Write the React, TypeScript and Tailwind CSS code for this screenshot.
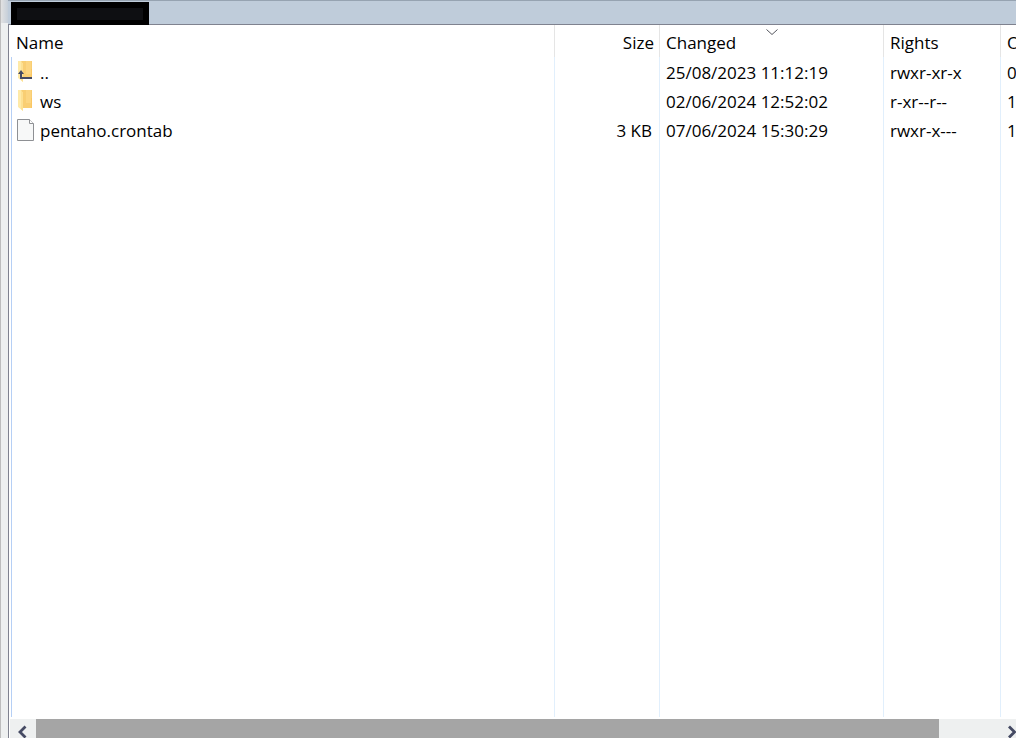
import { ReactNode } from 'react';

type FileRow = {
    name: string;
    icon: ReactNode;
    size: string;
    changed: string;
    rights: string;
    owner: string;
};

function FolderShape() {
    return (
        <>
            <path d="M2 0H15V18H2Z" fill="#f9ce73" />
            <path d="M9 0H14V13H9Z" fill="#fcd581" />
            <path d="M1 0H4L6 3V21L1 17Z" fill="#ffeaa8" />
            <path d="M4 0L6 3V21L4 19Z" fill="#fde092" />
            <path d="M14 8H15V18H14Z" fill="#fbc763" />
        </>
    );
}

function FolderIcon() {
    return (
        <svg width="18" height="22" viewBox="0 0 18 22" aria-hidden="true">
            <FolderShape />
        </svg>
    );
}

function ParentFolderIcon() {
    return (
        <svg width="18" height="22" viewBox="0 0 18 22" aria-hidden="true">
            <FolderShape />
            <path d="M4 11V17H15" fill="none" stroke="#454a63" strokeWidth="2" />
            <path d="M1 13L4 9L7 13Z" fill="#454a63" />
        </svg>
    );
}

function FileIcon() {
    return (
        <svg width="18" height="22" viewBox="0 0 18 22" aria-hidden="true">
            <path d="M0.5 0.5H12.5L16.5 4.5V21.5H0.5Z" fill="#f7f8f8" stroke="#8e9094" />
            <path d="M12.5 0.5V4.5H16.5" fill="#ffffff" stroke="#8e9094" />
        </svg>
    );
}

const rows: FileRow[] = [
    { name: '..', icon: <ParentFolderIcon />, size: '', changed: '25/08/2023 11:12:19', rights: 'rwxr-xr-x', owner: '0' },
    { name: 'ws', icon: <FolderIcon />, size: '', changed: '02/06/2024 12:52:02', rights: 'r-xr--r--', owner: '1' },
    { name: 'pentaho.crontab', icon: <FileIcon />, size: '3 KB', changed: '07/06/2024 15:30:29', rights: 'rwxr-x---', owner: '1' },
];

function FileTable() {
    return (
        <table className="w-full h-full table-fixed border-separate border-spacing-0 whitespace-nowrap text-left">
            <colgroup>
                <col />
                <col className="w-[105px]" />
                <col className="w-[224px]" />
                <col className="w-[117px]" />
                <col className="w-[15px]" />
            </colgroup>
            <thead>
                <tr className="h-8 [&>th]:p-0 [&>th]:font-normal [&>th]:border-r [&>th]:border-[#e5e5e5] [&>th:last-child]:border-r-0">
                    <th><span className="block pl-[5px] pt-1">Name</span></th>
                    <th><span className="block pr-[5px] pt-1 text-right">Size</span></th>
                    <th className="relative">
                        <span className="block pl-1.5 pt-1">Changed</span>
                        <svg className="absolute top-1 left-1/2 -translate-x-1/2" width="12" height="7" viewBox="0 0 12 7" aria-hidden="true">
                            <path d="M0.5 0.5L6 5.5L11.5 0.5" fill="none" stroke="#55575f" />
                        </svg>
                    </th>
                    <th><span className="block pl-1.5 pt-1">Rights</span></th>
                    <th className="overflow-hidden"><span className="block pl-1.5 pt-1">Owner</span></th>
                </tr>
            </thead>
            <tbody className="[&_td]:p-0 [&_td]:border-r [&_td]:border-[#e1effc] [&_td:first-child]:border-l [&_td:first-child]:border-l-[#b5cff5] [&_td:last-child]:border-r-0">
                {rows.map((row) => (
                    <tr key={row.name} className="h-[29px]">
                        <td>
                            <div className="flex items-center gap-[5px] pl-[5px]">
                                {row.icon}
                                <span className="pt-0.5">{row.name}</span>
                            </div>
                        </td>
                        <td><span className="block pt-0.5 pr-[7px] text-right">{row.size}</span></td>
                        <td><span className="block pt-0.5 pl-1.5">{row.changed}</span></td>
                        <td><span className="block pt-0.5 pl-1.5">{row.rights}</span></td>
                        <td className="overflow-hidden"><span className="block pt-0.5 pl-1.5">{row.owner}</span></td>
                    </tr>
                ))}
                {/* Empty row takes the rest of the height so the column lines reach the bottom */}
                <tr>
                    <td /><td /><td /><td /><td />
                </tr>
            </tbody>
        </table>
    );
}

function HorizontalScrollbar() {
    return (
        <div className="flex h-[19px] shrink-0 overflow-hidden bg-[#eef0f0]">
            <button type="button" aria-label="Scroll left" className="flex w-[26px] shrink-0 pl-[7px] pt-1.5">
                <svg width="10" height="14" viewBox="0 0 10 14" aria-hidden="true">
                    <path d="M8.5 1.5L3 7L8.5 12.5" fill="none" stroke="#454a63" strokeWidth="2.8" />
                </svg>
            </button>
            <div className="flex-1 bg-[#a5a5a5]" />
            <div className="w-[67px]" />
            <button type="button" aria-label="Scroll right" className="flex w-2.5 shrink-0 overflow-hidden pt-1.5">
                <svg className="shrink-0" width="12" height="14" viewBox="0 0 12 14" aria-hidden="true">
                    <path d="M3 1.5L8.5 7L3 12.5" fill="none" stroke="#454a63" strokeWidth="2.8" />
                </svg>
            </button>
        </div>
    );
}

export default function App() {
    return (
        <div className="flex h-screen overflow-hidden bg-[#eef0f0] font-['Open_Sans','Noto_Sans',sans-serif] text-[17px] leading-6 text-black">
            <div className="w-2 shrink-0 border-l border-[#bdbdbd]">
                <div className="h-[23px] bg-linear-to-r from-[#e2e2e2] to-[#c6cfd9]" />
            </div>
            <div className="flex min-w-0 flex-1 flex-col">
                <div className="flex h-6 shrink-0 border-t border-[#96a3b1] bg-[#bfccda] pl-[3px] pt-px">
                    <div className="z-10 h-[23px] w-[138px] bg-black px-1.5 pt-1.5 pb-1">
                        <div className="h-3 bg-[#0e0f12]" />
                    </div>
                </div>
                <div className="flex min-h-0 flex-1 flex-col border-l border-t border-[#7f828f] bg-white">
                    <div className="min-h-0 flex-1 pl-0.5 pb-0.5">
                        <FileTable />
                    </div>
                    <div className="flex flex-col pl-px">
                        <HorizontalScrollbar />
                    </div>
                </div>
            </div>
        </div>
    );
}
